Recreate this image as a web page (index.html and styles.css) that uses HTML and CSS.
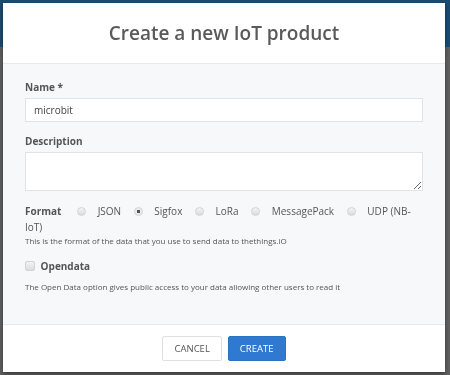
FILE: index.html
```html
<!DOCTYPE html>
<html lang="en">

<head>
  <meta charset="UTF-8">
  <title>Create a new IoT product</title>
  <link rel="stylesheet" href="styles.css">
</head>

<body>
  <div class="page">
    <div class="navbar"></div>
  </div>

  <!-- Modal -->
  <div class="modal">
    <div class="modal-header">
      <h2>Create a new IoT product</h2>
    </div>

    <div class="modal-body">
      <div class="field">
        <label class="field-label" for="name">Name *</label>
        <input class="form-control" id="name" type="text" value="microbit">
      </div>

      <div class="field">
        <label class="field-label" for="description">Description</label>
        <textarea class="form-control textarea" id="description"></textarea>
      </div>

      <div class="format">
        <span class="field-label">Format</span>
        <label class="radio"><input type="radio" name="format"> JSON</label>
        <label class="radio"><input type="radio" name="format" checked> Sigfox</label>
        <label class="radio"><input type="radio" name="format"> LoRa</label>
        <label class="radio"><input type="radio" name="format"> MessagePack</label>
        <label class="radio"><input type="radio" name="format"> UDP (NB-IoT)</label>
      </div>
      <p class="help">This is the format of the data that you use to send data to thethings.iO</p>

      <label class="checkbox"><input type="checkbox"> Opendata</label>
      <p class="help">The Open Data option gives public access to your data allowing other users to read it</p>
    </div>

    <div class="modal-footer">
      <button class="btn btn-default">Cancel</button>
      <button class="btn btn-primary">Create</button>
    </div>
  </div>
</body>

</html>
```

FILE: styles.css
```css
* {
  margin: 0;
  padding: 0;
  box-sizing: border-box;
}

body {
  font-family: 'Open Sans', 'Liberation Sans', sans-serif;
  background: #5f5f5f;
  color: #555;
  height: 375px;
  overflow: hidden;
}

.navbar {
  height: 47px;
  background: #1b4a70;
}

/* Modal */
.modal {
  position: fixed;
  top: 3px;
  left: 3px;
  width: 442px;
  height: 369px;
  background: #fff;
  display: flex;
  flex-direction: column;
  box-shadow: 0 2px 4px rgba(0, 0, 0, 0.4);
}

.modal-header {
  height: 61px;
  border-bottom: 1px solid #e6e8eb;
  display: flex;
  align-items: center;
  justify-content: center;
}

.modal-header h2 {
  font-size: 19px;
  font-weight: 600;
  color: #5a5a5a;
}

.modal-body {
  flex: 1;
  background: #f7f8fa;
  padding: 16px 22px 0;
}

.field {
  margin-bottom: 12px;
}

.field-label {
  display: block;
  font-size: 10px;
  font-weight: 700;
  color: #555;
  margin-bottom: 4px;
}

.form-control {
  display: block;
  width: 100%;
  height: 24px;
  border: 1px solid #e2e3e5;
  background: #fff;
  padding: 0 8px;
  font-family: inherit;
  font-size: 10px;
  color: #444;
  outline: none;
}

.textarea {
  height: 39px;
  resize: vertical;
}

.format {
  font-size: 10px;
  line-height: 16px;
  color: #555;
}

.format .field-label {
  display: inline;
  margin-right: 13px;
}

.radio {
  margin-right: 10px;
}

.radio input,
.checkbox input {
  appearance: none;
  width: 9px;
  height: 9px;
  border: 1px solid #d3d3d3;
  border-radius: 50%;
  background: linear-gradient(#f3f3f3, #dcdcdc);
  vertical-align: -1px;
  margin-right: 9px;
}

.radio input:checked {
  background: radial-gradient(circle, #555 0, #555 1.5px, #ececec 2px);
}

.help {
  font-size: 8px;
  color: #555;
  margin-bottom: 13px;
}

.checkbox {
  display: block;
  font-size: 10px;
  font-weight: 700;
  margin-bottom: 8px;
}

.checkbox input {
  border-radius: 2px;
  width: 10px;
  height: 10px;
  margin-right: 3px;
}

.modal-footer {
  height: 48px;
  border-top: 1px solid #e6e8eb;
  display: flex;
  align-items: center;
  justify-content: center;
  gap: 6px;
}

.btn {
  height: 25px;
  padding: 0 11px;
  font-family: inherit;
  font-size: 9.5px;
  text-transform: uppercase;
  border-radius: 2px;
  cursor: pointer;
}

.btn-default {
  background: #fff;
  border: 1px solid #e0e0e0;
  color: #555;
}

.btn-primary {
  background: #2f7ad0;
  border: 1px solid #2b72c3;
  color: #fff;
}
```
